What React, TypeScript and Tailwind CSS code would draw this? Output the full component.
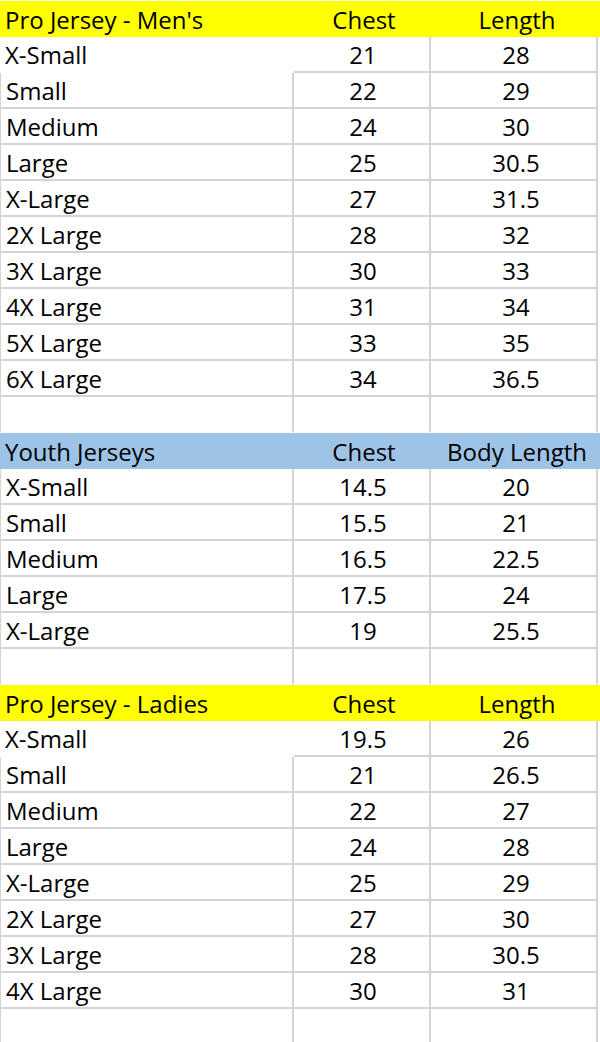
import React from "react";

type Section = {
  title: string;
  c2: string;
  c3: string;
  bg: string;
  whiteFirst: boolean;
  rows: [string, string, string][];
};

const sections: Section[] = [
  {
    title: "Pro Jersey - Men's",
    c2: "Chest",
    c3: "Length",
    bg: "bg-[#ffff00]",
    whiteFirst: true,
    rows: [
      ["X-Small", "21", "28"],
      ["Small", "22", "29"],
      ["Medium", "24", "30"],
      ["Large", "25", "30.5"],
      ["X-Large", "27", "31.5"],
      ["2X Large", "28", "32"],
      ["3X Large", "30", "33"],
      ["4X Large", "31", "34"],
      ["5X Large", "33", "35"],
      ["6X Large", "34", "36.5"],
    ],
  },
  {
    title: "Youth Jerseys",
    c2: "Chest",
    c3: "Body Length",
    bg: "bg-[#9dc3e6]",
    whiteFirst: false,
    rows: [
      ["X-Small", "14.5", "20"],
      ["Small", "15.5", "21"],
      ["Medium", "16.5", "22.5"],
      ["Large", "17.5", "24"],
      ["X-Large", "19", "25.5"],
    ],
  },
  {
    title: "Pro Jersey - Ladies",
    c2: "Chest",
    c3: "Length",
    bg: "bg-[#ffff00]",
    whiteFirst: true,
    rows: [
      ["X-Small", "19.5", "26"],
      ["Small", "21", "26.5"],
      ["Medium", "22", "27"],
      ["Large", "24", "28"],
      ["X-Large", "25", "29"],
      ["2X Large", "27", "30"],
      ["3X Large", "28", "30.5"],
      ["4X Large", "30", "31"],
    ],
  },
];

function HeaderRow({ s }: { s: Section }) {
  return (
    <div className={`${s.bg} h-[36px]`}>
      <div className="grid grid-cols-[294px_137px_167px] h-full items-end pb-[5px]">
        <div className="pl-[5px] leading-none">{s.title}</div>
        <div className="pl-[3px] text-center leading-none">{s.c2}</div>
        <div className="pl-[5px] text-center leading-none">{s.c3}</div>
      </div>
    </div>
  );
}

function DataRow({
  cells,
  white,
  last,
}: {
  cells: [string, string, string];
  white?: boolean;
  last?: boolean;
}) {
  const line = last ? "border-b-2 border-b-transparent" : "border-b-2";
  return (
    <div className="grid grid-cols-[294px_137px_167px] h-[36px]">
      <div
        className={`flex items-end pb-[4px] pl-[5px] leading-none border-[#d4d4d4] ${
          white ? "border-b-2 border-transparent" : `border-l border-r-2 ${line}`
        }`}
      >
        {cells[0]}
      </div>
      <div
        className={`flex items-end justify-center pb-[4px] pl-[3px] leading-none border-[#d4d4d4] border-r-2 ${line}`}
      >
        {cells[1]}
      </div>
      <div
        className={`flex items-end justify-center pb-[4px] pl-[5px] leading-none border-[#d4d4d4] border-r-2 ${line}`}
      >
        {cells[2]}
      </div>
    </div>
  );
}

export default function App() {
  return (
    <div className="w-[600px] h-[1042px] overflow-hidden bg-white pt-[1px] font-['Open_Sans',sans-serif] text-[24px] text-black">
      {sections.map((s, i) => (
        <div key={s.title}>
          <HeaderRow s={s} />
          {s.rows.map((r, j) => (
            <DataRow key={r[0]} cells={r} white={s.whiteFirst && j === 0} />
          ))}
          <DataRow cells={["", "", ""]} last={i < sections.length - 1} />
        </div>
      ))}
    </div>
  );
}
